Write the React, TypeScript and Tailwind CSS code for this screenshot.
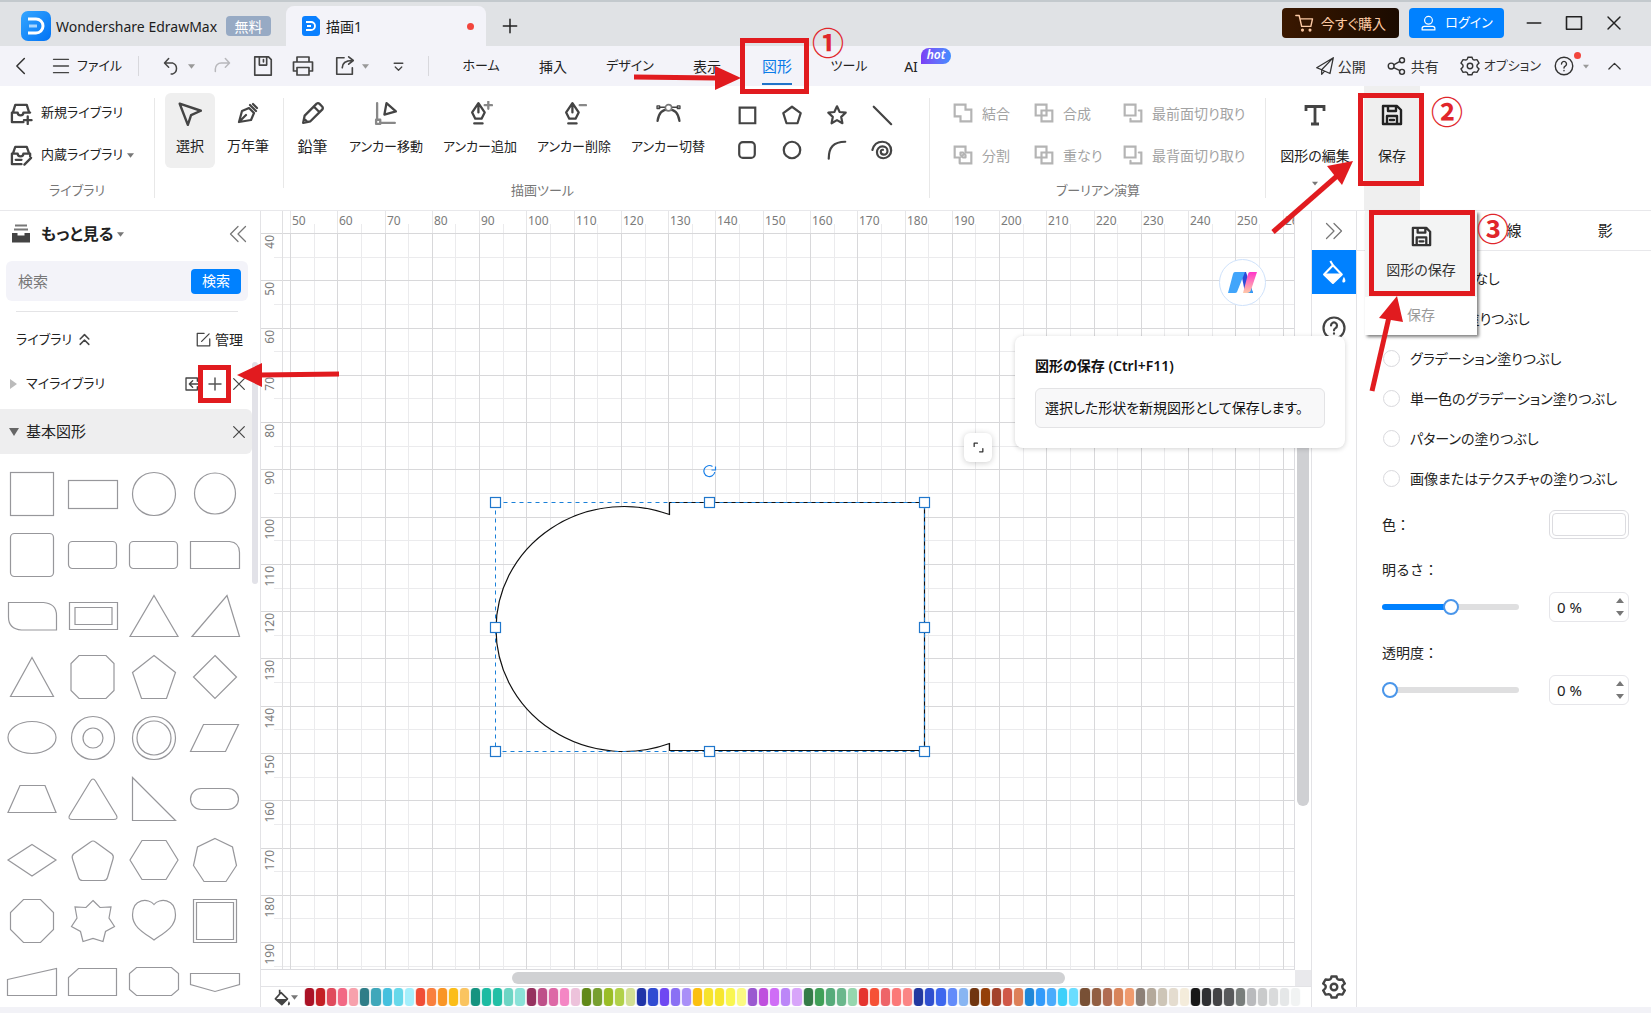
import React, { useState } from "react";
import type { ReactNode } from "react";

type IconProps = { size?: number; sw?: number; className?: string; children: ReactNode };

function Icon({ size = 24, sw = 2, className = "", children }: IconProps) {
  return (
    <svg
      width={size}
      height={size}
      viewBox="0 0 24 24"
      fill="none"
      stroke="currentColor"
      strokeWidth={sw}
      strokeLinecap="round"
      strokeLinejoin="round"
      className={"shrink-0 " + className}
      aria-hidden="true"
    >
      {children}
    </svg>
  );
}

function Caret({ className = "" }: { className?: string }) {
  return (
    <svg width="8" height="5" viewBox="0 0 8 5" className={"shrink-0 fill-[#777] " + className} aria-hidden="true">
      <path d="M0 0h8L4 5z" />
    </svg>
  );
}

function Cross() {
  return (
    <Icon size={16} sw={1.8} className="text-[#444]">
      <path d="M4 4l16 16M20 4L4 20" />
    </Icon>
  );
}

function FloppyIcon({ size = 24 }: { size?: number }) {
  return (
    <Icon size={size} sw={2.4}>
      <path d="M3 3h14l4 4v14H3z M8 3v5h8V3 M7 21v-8h10v8 M10 17h4" />
    </Icon>
  );
}

/* ---------- tutorial annotations ---------- */

function MarkBox({ className }: { className: string }) {
  return <span className={"pointer-events-none absolute z-50 border-[5px] border-[#e11b1f] " + className} />;
}

function StepNumber({ children, className }: { children: ReactNode; className: string }) {
  return (
    <span className={"pointer-events-none absolute z-50 text-[32px] leading-8 font-bold text-[#e0262b] " + className}>
      {children}
    </span>
  );
}

function Arrow({ w, h, line, head, className }: { w: number; h: number; line: string; head: string; className: string }) {
  return (
    <svg width={w} height={h} viewBox={`0 0 ${w} ${h}`} className={"pointer-events-none absolute z-50 max-w-none " + className} aria-hidden="true">
      <path d={line} stroke="#e11b1f" strokeWidth="5" />
      <path d={head} fill="#e11b1f" />
    </svg>
  );
}

/* ---------- title bar ---------- */

function TitleBar() {
  return (
    <header className="flex h-[46px] shrink-0 items-stretch border-t-2 border-[#c3c9cd] bg-[#e0e2e5]">
      <div className="flex w-[286px] items-center pt-1 pl-[21px]">
        <svg width="30" height="30" viewBox="0 0 30 30" aria-hidden="true">
          <defs>
            <linearGradient id="logo" x1="0" y1="0" x2="1" y2="1">
              <stop offset="0" stopColor="#35a6ff" />
              <stop offset="1" stopColor="#0072f5" />
            </linearGradient>
          </defs>
          <rect width="30" height="30" rx="7" fill="url(#logo)" />
          <path d="M7 8h8a7 7 0 0 1 0 14H7" fill="none" stroke="#fff" strokeWidth="3" />
          <path d="M8 15h8" stroke="#a9d6ff" strokeWidth="3" />
        </svg>
        <span className="ml-[5px] w-[170px] text-[14px] whitespace-nowrap text-[#1c1c1c]">Wondershare EdrawMax</span>
        <span className="flex h-5 w-[45px] items-center justify-center rounded bg-[#97aac4] text-[14px] text-white">無料</span>
      </div>
      <div className="mt-1 flex w-[200px] items-center rounded-t-lg bg-[#f3f3f9] pr-3 pl-4">
        <svg width="18" height="20" viewBox="0 0 18 20" aria-hidden="true">
          <path d="M3 0h11l4 4v13a3 3 0 0 1-3 3H3a3 3 0 0 1-3-3V3a3 3 0 0 1 3-3z" fill="#0a80ff" />
          <path d="M4 6h5a4 4 0 0 1 0 8H4M5 10h4" fill="none" stroke="#fff" strokeWidth="1.8" />
        </svg>
        <span className="ml-1.5 text-[14px] text-[#222]">描画1</span>
        <span className="ml-auto h-[7px] w-[7px] rounded-full bg-[#f2453d]" />
      </div>
      <button aria-label="新しいタブ" className="mt-1 ml-3 flex w-6 items-center justify-center text-[#222]">
        <Icon size={20} sw={1.8}>
          <path d="M12 4v16M4 12h16" />
        </Icon>
      </button>
      <div className="ml-auto flex items-start pt-[6px]">
        <button className="flex h-[30px] w-[117px] items-center justify-center gap-1.5 rounded bg-linear-to-r from-[#3a1800] to-[#1b0b00] text-[14px] text-[#fcc9a3]">
          <Icon size={20} sw={1.7}>
            <path d="M1 3h4l3 13h11l2-9H6" />
            <circle cx="9" cy="20.5" r="1" />
            <circle cx="18" cy="20.5" r="1" />
          </Icon>
          今すぐ購入
        </button>
        <button className="ml-[10px] flex h-[30px] w-[95px] items-center justify-center gap-2 rounded bg-[#0081ff] text-[13px] text-white">
          <Icon size={17} sw={1.7}>
            <circle cx="12" cy="7.5" r="5.5" />
            <path d="M3 21v-2q0-3 3-3h12q3 0 3 3v2z" />
          </Icon>
          ログイン
        </button>
        <button aria-label="最小化" className="ml-5 flex h-[30px] w-[20px] items-center justify-center text-[#222]">
          <Icon size={18} sw={2}>
            <path d="M3 12h18" />
          </Icon>
        </button>
        <button aria-label="最大化" className="ml-5 flex h-[30px] w-[20px] items-center justify-center text-[#222]">
          <Icon size={20} sw={1.9}>
            <path d="M3 4.500h18v15H3z" />
          </Icon>
        </button>
        <button aria-label="閉じる" className="mr-[27px] ml-5 flex h-[30px] w-[20px] items-center justify-center text-[#222]">
          <Icon size={18} sw={1.9}>
            <path d="M4 4l16 16M20 4L4 20" />
          </Icon>
        </button>
      </div>
    </header>
  );
}

/* ---------- menu bar ---------- */

const menuTabs = [
  { label: "ホーム", cls: "w-[72px] text-[13px]" },
  { label: "挿入", cls: "w-[72px] text-[14px]" },
  { label: "デザイン", cls: "w-[82px] text-[13px]" },
  { label: "表示", cls: "w-[72px] text-[14px]" },
  { label: "図形", cls: "w-[68px] text-[15px] text-[#0a7be8]", active: true },
  { label: "ツール", cls: "w-[76px] text-[13px]" },
  { label: "AI", cls: "w-[48px] text-[14px]", hot: true },
];

function MenuBar() {
  return (
    <div className="relative flex h-10 shrink-0 items-center bg-[#f3f3f9] text-[14px] text-[#222]">
      <button aria-label="戻る" className="ml-[11px] flex w-5 justify-center text-[#333]">
        <Icon size={20} sw={1.8}>
          <path d="M16 3l-9 9 9 9" />
        </Icon>
      </button>
      <button className="ml-5 flex w-[87px] items-center gap-1.5 text-[13px]">
        <Icon size={20} sw={1.6} className="text-[#444]">
          <path d="M3 4h18M3 12h18M3 20h18" />
        </Icon>
        ファイル
      </button>
      <span className="h-5 w-px bg-[#d8d8dd]" />
      <button aria-label="元に戻す" className="ml-[23px] flex items-center gap-[6px] text-[#444]">
        <Icon size={20} sw={1.8}>
          <path d="M8 3L3 8.500l5 5M3.500 8.500H13a7 7 0 0 1 0 13h-2" />
        </Icon>
        <Caret className="w-[7px] fill-[#999]" />
      </button>
      <button aria-label="やり直し" className="ml-[17px] text-[#b8b8bc]">
        <Icon size={20} sw={1.8}>
          <path d="M16 3l5 5.500-5 5M20.500 8.500H11a7 7 0 0 0-7 7v3" />
        </Icon>
      </button>
      <button aria-label="保存" className="ml-[20px] text-[#444]">
        <Icon size={22} sw={1.8}>
          <path d="M3 2h15l3 3v17H3zM8 2v9h8V2M12.500 5v2.500" />
        </Icon>
      </button>
      <button aria-label="印刷" className="ml-[17px] text-[#444]">
        <Icon size={24} sw={1.7}>
          <path d="M6 8V3h12v5M6 17H2.500V8h19v9H18M6 13.500h12V21H6z" />
        </Icon>
      </button>
      <button aria-label="エクスポート" className="ml-[19px] flex items-center gap-[6px] text-[#444]">
        <Icon size={22} sw={1.8}>
          <path d="M11 3H3v18h17v-7M9 14c0-5 4-8 11-8M16 2l5 4-5 4" />
        </Icon>
        <Caret className="w-[7px] fill-[#999]" />
      </button>
      <button aria-label="その他" className="ml-[21px] flex w-4 justify-center text-[#444]">
        <Icon size={13} sw={2.4}>
          <path d="M4 6h16M6 13l6 6 6-6" />
        </Icon>
      </button>
      <span className="mr-4 ml-[22px] h-5 w-px bg-[#d8d8dd]" />
      {menuTabs.map((t) => (
        <button key={t.label} className={"relative flex h-10 items-center justify-center " + t.cls}>
          {t.label}
          {t.active && (
            <>
              <span className="absolute bottom-[1px] h-0.5 w-[30px] bg-[#2173c8]" />
              <MarkBox className="top-[-8px] left-[-3px] h-[56px] w-[69px]" />
              <StepNumber className="top-[-19px] left-[69px]">①</StepNumber>
              <Arrow w={108} h={26} line="M0 12L82 13" head="M81 1L107 13L81 25z" className="top-[19px] left-[-109px]" />
            </>
          )}
          {t.hot && (
            <span className="absolute top-0.5 left-[34px] h-4 w-[30px] rounded-[8px_8px_8px_0] bg-linear-to-r from-[#7a3df5] to-[#3d8dff] text-center text-[12px] leading-[14px] font-semibold text-white italic">
              hot
            </span>
          )}
        </button>
      ))}
      <div className="ml-auto flex items-center text-[#333]">
        <button className="flex items-center gap-[3px]">
          <Icon size={20} sw={1.5}>
            <path d="M22 2L2 14l6 2.500L18 21zM22 2L8 16.500V22l3.500-3.800" />
          </Icon>
          公開
        </button>
        <button className="ml-[21px] flex items-center gap-[4px]">
          <Icon size={20} sw={1.7}>
            <circle cx="5" cy="12" r="3.500" />
            <circle cx="18" cy="5" r="3" />
            <circle cx="18" cy="19" r="3" />
            <path d="M8 10.500L15.500 6.500M8 14l7.500 3.500" />
          </Icon>
          共有
        </button>
        <button className="ml-[21px] flex items-center gap-[4px] text-[13px]">
          <Gear size={20} sw={1.7} />
          オプション
        </button>
        <button aria-label="ヘルプ" className="relative ml-[13px] flex items-center gap-[9px]">
          <Icon size={20} sw={1.7}>
            <circle cx="12" cy="12" r="10.500" />
            <path d="M9 9.500a3 3 0 1 1 4.500 2.600q-1.500.9-1.500 2.200M12 17.300v.4" />
          </Icon>
          <span className="absolute top-[-4px] left-[20px] h-[7px] w-[7px] rounded-full bg-[#f2453d]" />
          <Caret className="w-[6px] fill-[#999]" />
        </button>
        <button aria-label="リボンを折りたたむ" className="mr-[29px] ml-[18px]">
          <Icon size={15} sw={2}>
            <path d="M3 16l9-9 9 9" />
          </Icon>
        </button>
      </div>
    </div>
  );
}

function Gear({ size, sw }: { size: number; sw: number }) {
  return (
    <Icon size={size} sw={sw}>
      <path d="M9.500 1.500h5q.4 3.600 3.600 3.200l2.400-.2 2.300 4.100q-2.600 1.700-2.600 3.400t2.600 3.400l-2.300 4.100-2.400-.2q-3.200-.4-3.600 3.200h-5q-.4-3.600-3.600-3.200l-2.400.2-2.300-4.100Q3.800 13.700 3.800 12T1.200 8.600l2.300-4.100 2.400.2q3.200.4 3.600-3.200z" />
      <circle cx="12" cy="12" r="3.300" />
    </Icon>
  );
}

/* ---------- ribbon ---------- */

const drawTools: { label: string; icon: ReactNode; cls: string }[] = [
  {
    label: "鉛筆",
    cls: "w-[53px] text-[15px]",
    icon: <path d="M3 21l1.500-7L16 2.500q1.500-1 3 .5l2 2q1.500 1.500.5 3L10 19.500zM13.500 5.500l5 5M4 17l3 3" />,
  },
  {
    label: "アンカー移動",
    cls: "w-[94px] text-[13px]",
    icon: (
      <>
        <path d="M3 2v16M6 21h14" stroke="#888" />
        <path d="M2 18h4v4H2z" stroke="#888" />
        <path d="M12 2l9 8-11 3z" />
      </>
    ),
  },
  {
    label: "アンカー追加",
    cls: "w-[94px] text-[13px]",
    icon: (
      <>
        <path d="M10 2l6 9-3 6H7l-3-6zM10 4v7M6 21.500h8" />
        <path d="M16 4h7M19.500 .5v7" stroke="#888" />
      </>
    ),
  },
  {
    label: "アンカー削除",
    cls: "w-[94px] text-[13px]",
    icon: (
      <>
        <path d="M10 2l6 9-3 6H7l-3-6zM10 4v7M6 21.500h8" />
        <path d="M17 4h6" stroke="#888" />
      </>
    ),
  },
  {
    label: "アンカー切替",
    cls: "w-[94px] text-[13px]",
    icon: (
      <>
        <path d="M1.500 19c1-7 4-11 10.500-11s9.500 4 10.500 11" />
        <path d="M3 6h6M15 6h6" strokeWidth="1.500" />
        <path d="M1 4.700h2.500v2.500H1zM20.500 4.700H23v2.500h-2.500z" strokeWidth="1.300" />
        <circle cx="12" cy="6.500" r="3" fill="#fff" stroke="#777" strokeWidth="1.500" />
      </>
    ),
  },
];

const quickShapes: { name: string; d: ReactNode }[] = [
  { name: "四角形", d: <path d="M4 4h17v17H4z" strokeLinejoin="miter" /> },
  { name: "五角形", d: <path d="M12 3l9.500 7L18 21H6L2.500 10z" /> },
  { name: "星", d: <path d="M12 2.500l2.900 6.200 6.600.8-4.900 4.600 1.300 6.900-5.900-3.400-5.900 3.400 1.300-6.900L2.500 9.500l6.600-.8z" /> },
  { name: "直線", d: <path d="M3 3l19 19" /> },
  { name: "角丸四角形", d: <rect x="3.500" y="3.500" width="17" height="17" rx="4" /> },
  { name: "円", d: <circle cx="12" cy="12" r="9" /> },
  { name: "円弧", d: <path d="M3 21.500C3 9 8 3 21 3" /> },
  {
    name: "らせん",
    d: <path d="M1.500 12C3 6 7 3 12.500 3 18 3 22 7 22 12.500c0 5-4 8.500-8.500 8.500-4.500 0-7-3-7-6.500s2.500-6.500 6-6.500 5.500 2.500 5.500 5-2 4-4 4-3.300-1.500-3.300-3.200 1.300-2.300 2.300-2" />,
  },
];

const boolOps: { label: string; d: string }[][] = [
  [
    { label: "結合", d: "M2 2h13v6h7v14H9v-6H2z" },
    { label: "分割", d: "M15 8V2H2v13h6M9 22h13V9h-6M9 9h3M9 9v3M15 15h-3M15 15v-3M8 22v-6M10 14l4-4" },
  ],
  [
    { label: "合成", d: "M2 2h13v13H2zM9 9h13v13H9z" },
    { label: "重なり", d: "M2 2h13v13H2zM9 9h13v13H9z" },
  ],
  [
    { label: "最前面切り取り", d: "M2 2h13v13H2zM19 9h3v13H9v-3" },
    { label: "最背面切り取り", d: "M2 2h13v13H2zM19 9h3v13H9v-3" },
  ],
];

function GroupLabel({ children }: { children: ReactNode }) {
  return <div className="mt-auto pb-[10px] text-center text-[13px] leading-5 text-[#777]">{children}</div>;
}

function Divider({ className = "h-[100px]" }: { className?: string }) {
  return <span className={"mt-3 w-px shrink-0 bg-[#e8e8e8] " + className} />;
}

function Ribbon() {
  return (
    <div className="relative flex h-[124px] shrink-0 bg-white text-[14px] text-[#222]">
      <div className="flex w-[154px] shrink-0 flex-col pt-[14px] text-[13px]">
        <button className="flex h-[26px] items-center gap-2 pl-[10px]">
          <Icon size={23} sw={2.4} className="text-[#444]">
            <path d="M3 11l2.500-8h12L20 11M2 11h6q0 3 3 3t3-3h7M2 11v10h12M18.500 15v8M14.500 19h8" />
          </Icon>
          新規ライブラリ
        </button>
        <button className="mt-4 flex h-[26px] items-center gap-2 pl-[10px]">
          <Icon size={23} sw={2.4} className="text-[#444]">
            <path d="M3 10l2.500-7h12L20 10M2 10h6q0 3 3 3t3-3h7v3M2 10v11h10M6 16.500h6M15 21.500l7-7" />
          </Icon>
          <span className="flex items-center gap-1">
            内蔵ライブラリ
            <Caret className="w-[7px]" />
          </span>
        </button>
        <GroupLabel>ライブラリ</GroupLabel>
      </div>
      <Divider />
      <div className="flex w-[128px] shrink-0 items-start pt-[7px] pl-[10px]">
        <button className="flex h-[75px] w-[50px] flex-col items-center gap-[9px] rounded-md bg-[#efefef] pt-2 text-[14px]">
          <Icon size={26} sw={2.2} className="text-[#444]">
            <path d="M2.500 2.500L22 9l-9 4-3 9z" />
          </Icon>
          <span className="leading-5">選択</span>
        </button>
        <button className="ml-[8px] flex h-[75px] w-[50px] flex-col items-center gap-[9px] pt-2 text-[14px]">
          <Icon size={24} sw={2.2} className="text-[#444]">
            <path d="M3 21l3-11 7-3 5 5-3 7zM3 21l7-7M14 4l6 6M17 3l4 4" />
          </Icon>
          <span className="mt-0.5 leading-5 whitespace-nowrap">万年筆</span>
        </button>
      </div>
      <Divider className="h-[90px]" />
      <div className="flex w-[645px] shrink-0 flex-col pt-[15px]">
        <div className="flex pl-0.5">
          {drawTools.map((t) => (
            <button key={t.label} className={"flex flex-col items-center gap-[10px] " + t.cls}>
              <Icon size={25} sw={2.2} className="text-[#444]">
                {t.icon}
              </Icon>
              <span className="leading-5 whitespace-nowrap">{t.label}</span>
            </button>
          ))}
          <div className="ml-[9px] grid grid-cols-4 gap-y-[11px] pt-[2px]">
            {quickShapes.map((s) => (
              <button key={s.name} aria-label={s.name} className="flex h-6 w-[45px] items-center justify-center text-[#444]">
                <Icon size={22} sw={2.4}>
                  {s.d}
                </Icon>
              </button>
            ))}
          </div>
        </div>
        <div className="mt-auto pr-[128px] text-center">
          <GroupLabel>描画ツール</GroupLabel>
        </div>
      </div>
      <Divider />
      <div className="flex w-[335px] shrink-0 flex-col pt-[14px] pl-[23px] text-[#a3a3a3]">
        <div className="flex">
          {boolOps.map((col, i) => (
            <div key={i} className={"flex flex-col gap-4 " + (i === 0 ? "w-[81px]" : i === 1 ? "w-[89px]" : "")}>
              {col.map((op) => (
                <button key={op.label} disabled className="flex h-[26px] items-center gap-[9px] whitespace-nowrap">
                  <Icon size={20} sw={2.6} className="text-[#b4b4b4]">
                    <path d={op.d} strokeLinejoin="miter" />
                  </Icon>
                  {op.label}
                </button>
              ))}
            </div>
          ))}
        </div>
        <div className="mt-auto pr-[22px]">
          <GroupLabel>ブーリアン演算</GroupLabel>
        </div>
      </div>
      <Divider />
      <button className="flex w-[98px] shrink-0 flex-col items-center pt-[17px]">
        <svg width="24" height="24" viewBox="0 0 24 24" fill="none" stroke="#444" strokeWidth="2.8" aria-hidden="true">
          <path d="M3 8V3.500h18V8M12 3.500v17M8 21h8" />
        </svg>
        <span className="mt-[19px] leading-5 whitespace-nowrap">図形の編集</span>
        <Caret className="mt-[15px] w-[6px]" />
      </button>
      <div className="relative w-14 shrink-0 bg-[#efefef]">
        <button className="flex h-full w-full flex-col items-center pt-[17px] text-[14px] text-[#222]">
          <FloppyIcon />
          <span className="mt-[19px] leading-5">保存</span>
        </button>
        <MarkBox className="top-[7px] left-[-6px] h-[93px] w-[66px]" />
        <StepNumber className="top-[10px] left-[67px]">②</StepNumber>
        <Arrow w={84} h={76} line="M2 72L66 16" head="M82 1L56 6L71 25z" className="top-[74px] left-[-93px]" />

        <div className="absolute top-[125px] left-px z-40 w-[112px] bg-white shadow-[2px_2px_3px_rgba(0,0,0,0.5)]">
          <button className="flex h-[86px] w-full flex-col items-center bg-[#f3f4f4] pt-[14px] text-[#333]">
            <FloppyIcon size={23} />
            <span className="mt-[12px] leading-5">図形の保存</span>
          </button>
          <div className="h-[38px] text-center text-[14px] leading-[36px] text-[#999]">保存</div>
          <MarkBox className="top-[-1px] left-[4px] h-[86px] w-[106px]" />
          <StepNumber className="top-[2px] left-[112px]">③</StepNumber>
          <Arrow w={40} h={98} line="M5 96L22 22" head="M30 1L12 23L36 27z" className="top-[84px] left-0.5" />
        </div>
      </div>
    </div>
  );
}

/* ---------- left library panel ---------- */

/* Each outline is drawn in a 61x61 cell, centred on 31,31. */
const libraryShapes: ReactNode[] = [
  <rect x="9.500" y="9.500" width="43" height="43" />,
  <rect x="6.500" y="17.500" width="49" height="28" />,
  <circle cx="31" cy="31" r="21.500" />,
  <circle cx="31" cy="30.500" r="20.500" />,
  <rect x="9.500" y="9.500" width="43" height="43" rx="4" />,
  <rect x="6.500" y="17.500" width="48" height="27" rx="4" />,
  <rect x="6.500" y="17.500" width="48" height="27" rx="4" />,
  <path d="M6.500 17.500h39q10 1 10 11v16h-49z" />,
  <path d="M7.500 17.500h35q13 1 13 13v14.500h-35q-13-1-13-13z" />,
  <path d="M7.500 17.500h48v27h-48zM13 22.500h37v17H13z" />,
  <path d="M31 10.500l24 41H7z" />,
  <path d="M43 10.500l12.500 41H8z" />,
  <path d="M31 11.500l21.500 39h-43z" />,
  <path d="M17 9.500h27l8 8v27l-8 8H17l-8-8v-27z" />,
  <path d="M31 9.500l21.500 17-9 26h-25l-9-26z" />,
  <path d="M31 9.500L52.500 31 31 52.500 9.500 31z" />,
  <ellipse cx="31" cy="30.500" rx="24" ry="16" />,
  <g><circle cx="31" cy="31" r="21.500" /><circle cx="31" cy="31" r="10" /></g>,
  <g><circle cx="31" cy="31" r="21.500" /><circle cx="31" cy="31" r="17" /></g>,
  <path d="M19.500 17.500h35l-13 27H6.500z" />,
  <path d="M19 17.500h25l11 27H7z" />,
  <path d="M28.500 13q2.500-4 5 0l21 34.500q2 4-3 4h-41q-5 0-3-4z" />,
  <path d="M9.500 9.500l43 43h-43z" />,
  <rect x="6.500" y="20.500" width="48" height="21" rx="10.500" />,
  <path d="M31 15.500l24 15.500-24 16L7 31z" />,
  <path d="M28.500 13q2.500-2 5 0l16.500 12q2 2 1 5L45.500 48.500q-1 3-4 3h-21q-3 0-4-3L10.500 30q-1-3 1-5z" />,
  <path d="M19 11.500h24L55 31 43 50.500H19L7 31z" />,
  <path d="M31 9.500l17.500 8.500 4 18.500L42 52.500H20L9.500 36.500l4-18.500z" />,
  <path d="M22.500 9.500h17l13 13v17l-13 13h-17l-13-13v-17z" />,
  <path d="M31 10.500l7 7 11-.5-2 11 5.500 8.500-9 5L41 51.500l-10-3-10 3-2.500-10-9-5L15 28l-2-11 11 .5z" />,
  <path d="M31 14.500C36 8 52.500 8 52.500 25 52.500 38 39 44 31 50 23 44 9.500 38 9.500 25 9.500 8 26 8 31 14.500z" />,
  <path d="M9.500 9.500h43v43h-43zM12.500 12.500h37v37h-37z" />,
  <path d="M6.500 28.500l49-11v27h-49z" />,
  <path d="M16.500 17.500h38v27h-48v-18z" />,
  <path d="M13.500 16.500h35l7 6v16l-7 6h-35l-7-6v-16z" />,
  <path d="M6.500 22.500h49v11L31 40.500 6.500 33.500z" />,
];

function LeftPanel() {
  return (
    <aside className="relative z-20 flex w-[261px] shrink-0 flex-col border-r border-[#e3e3e6] bg-white text-[#222]">
      <div className="flex h-[46px] shrink-0 items-center pr-[12px] pl-[11px]">
        <svg width="20" height="20" viewBox="0 0 20 20" aria-hidden="true">
          <path d="M4 1.500h12M3 5.500h14" stroke="#777" strokeWidth="2" />
          <path d="M1 9h5.500v2.500h7V9H19v9.500H1z" fill="#444" />
        </svg>
        <button className="ml-[10px] flex items-center gap-[3px] text-[16px] font-bold">
          もっと見る
          <Caret className="w-[7px]" />
        </button>
        <button aria-label="パネルを閉じる" className="ml-auto text-[#777]">
          <Icon size={20} sw={1.5}>
            <path d="M12 3l-9 9 9 9M21 3l-9 9 9 9" />
          </Icon>
        </button>
      </div>
      <form className="mt-1 mr-3 ml-1.5 flex h-10 shrink-0 items-center rounded-md bg-[#f3f3f9] pr-[7px] pl-3">
        <input aria-label="検索" placeholder="検索" className="min-w-0 flex-1 bg-transparent text-[15px] outline-none placeholder:text-[#777]" />
        <button type="button" className="h-[25px] w-[50px] rounded bg-[#0081ff] text-[14px] leading-5 text-white">
          検索
        </button>
      </form>
      <hr className="mt-[10px] mr-[22px] ml-4 shrink-0 border-[#e4e4e6]" />
      <div className="flex h-[53px] shrink-0 items-center pt-0.5 pr-[17px] pl-4 text-[13px]">
        <button className="flex items-center gap-[6px]">
          ライブラリ
          <Icon size={13} sw={2.8} className="text-[#444]">
            <path d="M4 11l8-8 8 8M4 21l8-8 8 8" />
          </Icon>
        </button>
        <button className="ml-auto flex items-center gap-1 text-[14px]">
          <Icon size={15} sw={2} className="text-[#444]">
            <path d="M13 2H2v20h20V11M9 15L21 3" />
          </Icon>
          管理
        </button>
      </div>
      <div className="relative mb-[6px] flex h-[38px] shrink-0 items-center pr-[13px] pl-[10px] text-[13px]">
        <svg width="7" height="10" viewBox="0 0 7 10" className="fill-[#bbb]" aria-hidden="true">
          <path d="M0 0l7 5-7 5z" />
        </svg>
        <span className="ml-[9px]">マイライブラリ</span>
        <div className="ml-auto flex items-center">
          <button aria-label="インポート" className="text-[#444]">
            <Icon size={16} sw={2}>
              <path d="M20 8V3H3v18h17v-5M22 12H8M13 7l-5 5 5 5" />
            </Icon>
          </button>
          <button aria-label="追加" className="mr-[8px] ml-[7px] text-[#555]">
            <Icon size={16} sw={2.2}>
              <path d="M12 3v18M3 12h18" />
            </Icon>
          </button>
          <button aria-label="マイライブラリを閉じる">
            <Cross />
          </button>
        </div>
        <MarkBox className="top-0 left-[198px] h-[38px] w-[33px]" />
        <Arrow w={102} h={26} line="M24 13L102 12" head="M0 13L25 1V25z" className="top-[-3px] left-[237px]" />
      </div>
      <div className="mr-2 flex h-[45px] shrink-0 items-center rounded-r-md bg-[#eeeeef] pr-[5px] pl-[9px] text-[15px]">
        <svg width="10" height="8" viewBox="0 0 10 8" className="fill-[#666]" aria-hidden="true">
          <path d="M0 0h10L5 8z" />
        </svg>
        <span className="ml-[7px] flex-1">基本図形</span>
        <button aria-label="基本図形を閉じる">
          <Cross />
        </button>
      </div>
      <div className="mt-[9px] ml-px grid min-h-0 flex-1 auto-rows-[61px] grid-cols-[repeat(4,61px)] overflow-hidden">
        {libraryShapes.map((s, i) => (
          <button key={i} aria-label={`基本図形 ${i + 1}`} className="h-[61px]">
            <svg width="61" height="61" viewBox="0 0 61 61" fill="none" stroke="#97979b" strokeWidth="1.2" aria-hidden="true">
              {s}
            </svg>
          </button>
        ))}
      </div>
      <span className="absolute top-[151px] right-[2px] h-[222px] w-1.5 rounded-full bg-[#e2e2e8]" />
    </aside>
  );
}

/* ---------- drawing canvas ---------- */

const STEP = 47.27;
const xMajor = Array.from({ length: 22 }, (_, i) => 29 + i * STEP);
const yMajor = Array.from({ length: 16 }, (_, i) => 22 + i * STEP);
const px = (n: number) => Math.round(n) + 0.5;

function DrawingSheet() {
  const handles = [
    [234, 291], [448, 291], [663, 291],
    [234, 416], [663, 416],
    [234, 540], [448, 540], [663, 540],
  ];
  return (
    <svg className="absolute inset-0 h-full w-full bg-white" aria-label="描画キャンバス">
      <g shapeRendering="crispEdges">
        {xMajor.map((x) => (
          <path key={"a" + x} d={`M${px(x + STEP / 2)} 13V2000`} stroke="#ebebed" />
        ))}
        {yMajor.map((y) => (
          <path key={"b" + y} d={`M13 ${px(y + STEP / 2)}H3000`} stroke="#ebebed" />
        ))}
        {xMajor.map((x) => (
          <path key={"c" + x} d={`M${px(x)} 22V2000`} stroke="#d8d8da" />
        ))}
        {xMajor.map((x) => (
          <path key={"e" + x} d={`M${px(x)} 0V22`} stroke="#e6e6e8" />
        ))}
        {yMajor.map((y) => (
          <path key={"d" + y} d={`M0 ${px(y)}H3000`} stroke="#d8d8da" />
        ))}
        <path d="M21.500 0V2000" stroke="#e0e0e2" />
      </g>
      <g fill="#7b7b7b" fontSize="12">
        {xMajor.map((x, i) => (
          <text key={x} x={Math.round(x) + 2} y="14">
            {50 + i * 10}
          </text>
        ))}
        {yMajor.map((y, i) => (
          <text key={y} textAnchor="end" transform={`translate(13 ${Math.round(y) + 2}) rotate(-90)`}>
            {40 + i * 10}
          </text>
        ))}
      </g>
      <path
        d="M408.500 303.500A128 122.500 0 1 0 408.500 532.500V539.500H663.500V291.500H408.500z"
        fill="#fff"
        stroke="#111"
        strokeWidth="1.2"
      />
      <rect x="234.500" y="291.500" width="429" height="249" fill="none" stroke="#1a80d8" strokeDasharray="4 4" />
      {handles.map(([x, y]) => (
        <rect key={x + "-" + y} x={x - 4.5} y={y - 4.5} width="10" height="10" fill="#fff" stroke="#2077cc" strokeWidth="1.2" />
      ))}
      <path d="M451.500 255.500A5.500 5.500 0 1 0 453.800 261M454.500 255.500v3.500h-4" fill="none" stroke="#1a80e8" strokeWidth="1.2" />
    </svg>
  );
}

const swatches =
  "ab1226 c41f24 e04a5c f26884 f7a1ac 2f7d88 3fa7ba 45c0de 66d8ea a5effc f04e37 f97f3e f99526 fbbd18 fac460 159380 1dbba2 22bfa6 6dd5c4 8ae2d8 95315f be5089 dd68a6 f486c4 edc2db 618918 779f30 9abd26 b1d149 d2df93 2034a8 304bd2 6e48f2 8a70f4 a98ff8 fbbf10 f6e32c f6e62e f9f650 fbfa82 9a58d0 bf4fde cf6df6 bc86f8 d8a5fa 357b48 40a058 56ab7a 6ab78c 96d6ae e5342f f65136 ee6468 fb7878 fb8585 2238a0 2f4fcf 3d67ee 628bfa 88b5f2 703510 943f08 a3412a d05848 dd8058 1f87d8 339bfa 4aabfc 3cd0fa 6addff 785035 925f43 b06c52 d8845a ef9a6d 8d8077 b4a99b cdc5b7 e4dccf f4ecdb 181818 2f3033 434345 58595b 797e7c b9babd c9cacb d9dadb e5e7e8 f1f3f3".split(" ");

function CanvasArea() {
  return (
    <section className="relative z-10 flex min-w-0 flex-1 flex-col">
      <div className="flex min-h-0 flex-1">
        <div className="relative min-w-0 flex-1 overflow-hidden border-r border-b border-[#dcdce0]">
          <DrawingSheet />
          <button aria-label="AI アシスタント" className="absolute top-[48px] right-[28px] flex h-[47px] w-[47px] items-center justify-center rounded-full border border-[#cfe2fb] bg-white">
            <svg width="31" height="23" viewBox="0 0 31 23" aria-hidden="true">
              <defs>
                <linearGradient id="pinkbar" x1="0" y1="0" x2="0" y2="1">
                  <stop offset="0" stopColor="#ff35c8" />
                  <stop offset="1" stopColor="#ffc9a8" />
                </linearGradient>
              </defs>
              <path d="M14 1h5l7 21h-8z" fill="#2b4bd8" />
              <path d="M20 22l4-6 2 6z" fill="#2f9bf5" />
              <path d="M8 1h10l-8 20q-.5 1-2 1H1L6 3q.5-2 2-2z" fill="#41a5fb" />
              <path d="M23 1h7l-6 18q-1 3-4 3h-4l5-19q.5-2 2-2z" fill="url(#pinkbar)" />
            </svg>
          </button>
          <button aria-label="全体表示" className="absolute top-[222px] right-[302px] flex h-[29px] w-[28px] items-center justify-center rounded-md bg-white text-[#333] shadow-[0_1px_6px_rgba(0,0,0,0.2)]">
            <Icon size={13} sw={2.4}>
              <path d="M4 10V4h6M20 14v6h-6" />
            </Icon>
          </button>
        </div>
        <div className="relative w-4 shrink-0 bg-white">
          <span className="absolute top-[190px] left-[2px] h-[405px] w-[12px] rounded-full bg-[#cfd0d3]" />
        </div>
      </div>
      <div className="flex h-4 shrink-0">
        <div className="flex flex-1 items-center bg-white pr-[230px] pl-[251px]">
          <span className="h-3 flex-1 rounded-full bg-[#d0d1d3]" />
        </div>
        <span className="w-4 bg-[#e9e9ec]" />
      </div>
      <div className="flex h-[21px] shrink-0 items-center border-t border-[#e3e3e6] bg-white pr-[10px] pl-[13px]">
        <button aria-label="塗りつぶし色" className="flex w-[30px] shrink-0 items-center">
          <svg width="17" height="17" viewBox="0 0 24 24" aria-hidden="true">
            <path d="M8 1v6M10 5l9 9-8 8-9-8z" fill="none" stroke="#444" strokeWidth="2.4" strokeLinejoin="round" />
            <path d="M3 14h16l-8 8zM21 17q3 5 0 6t0-6z" fill="#444" />
          </svg>
          <Caret className="w-[7px]" />
        </button>
        <div className="flex h-[18px] flex-1">
          {swatches.map((c, i) => (
            <button key={i} aria-label={"#" + c} className="flex-1 rounded-[4px] border-x border-white/80" style={{ backgroundColor: "#" + c }} />
          ))}
        </div>
      </div>

      <div role="tooltip" className="absolute top-[125px] right-[-34px] z-30 w-[330px] rounded-lg bg-white px-5 pt-[20px] pb-5 text-[#111] shadow-[0_1px_5px_rgba(0,0,0,0.18)]">
        <p className="text-[14px] leading-5 font-semibold">図形の保存 (Ctrl+F11)</p>
        <p className="mt-3 rounded-md border border-[#e3e3e5] bg-[#f8f8f9] px-[9px] py-[9px] text-[14px] leading-5 whitespace-nowrap">
          選択した形状を新規図形として保存します。
        </p>
      </div>
    </section>
  );
}

/* ---------- right side ---------- */

function Rail() {
  return (
    <nav className="flex w-[46px] shrink-0 flex-col items-center border-x border-[#e3e3e6] bg-white text-[#444]">
      <button aria-label="展開" className="flex h-[39px] items-center text-[#777]">
        <Icon size={20} sw={1.5}>
          <path d="M3 3l9 9-9 9M12 3l9 9-9 9" />
        </Icon>
      </button>
      <button aria-label="塗りつぶし" className="flex h-[44px] w-full items-center justify-center bg-[#0081ff]">
        <svg width="25" height="25" viewBox="0 0 24 24" aria-hidden="true">
          <path d="M8 1l2.500 4 8.500 9-8.500 8L2 14l8.500-9" fill="none" stroke="#fff" strokeWidth="2" strokeLinejoin="round" />
          <path d="M2 13h17l-8.500 9zM21 16q3 5 0 5.500t0-5.500z" fill="#fff" />
        </svg>
      </button>
      <button aria-label="ヘルプ" className="mt-[22px]">
        <Icon size={24} sw={2.2}>
          <circle cx="12" cy="12" r="10.500" />
          <path d="M9 9.500a3 3 0 1 1 4.500 2.600q-1.500.9-1.500 2.200M12 17.300v.4" />
        </Icon>
      </button>
      <button aria-label="設定" className="mt-auto mb-[8px]">
        <Gear size={24} sw={2.4} />
      </button>
    </nav>
  );
}

const fills = [
  "塗りつぶしなし",
  "単一色の塗りつぶし",
  "グラデーション塗りつぶし",
  "単一色のグラデーション塗りつぶし",
  "パターンの塗りつぶし",
  "画像またはテクスチャの塗りつぶし",
];

function SliderRow({ id, label, start, min }: { id: string; label: string; start: number; min: number }) {
  const [value, setValue] = useState(start);
  const pct = ((value - min) / (100 - min)) * 100;
  return (
    <div>
      <label htmlFor={id} className="block leading-6 [font-feature-settings:normal]">
        {label}
      </label>
      <div className="mt-[10px] flex h-[30px] items-center">
        <input
          id={id}
          type="range"
          min={min}
          max={100}
          value={value}
          onChange={(e) => setValue(Number(e.target.value))}
          style={{ backgroundImage: `linear-gradient(to right, #0081ff ${pct}%, #dfdfe0 ${pct}%)` }}
          className="h-1.5 w-[137px] appearance-none rounded-full [&::-webkit-slider-thumb]:h-4 [&::-webkit-slider-thumb]:w-4 [&::-webkit-slider-thumb]:appearance-none [&::-webkit-slider-thumb]:rounded-full [&::-webkit-slider-thumb]:border-2 [&::-webkit-slider-thumb]:border-[#4a96ea] [&::-webkit-slider-thumb]:bg-white"
        />
        <div className="ml-auto flex h-[30px] w-20 items-center rounded-md border border-[#e6e6ea] bg-white pr-[4px] pl-[7px]">
          <input aria-label={label + "の値"} value={`${value} %`} readOnly className="w-0 min-w-0 flex-1 text-[15px] outline-none" />
          <div className="flex flex-col gap-2">
            <button aria-label="増やす" onClick={() => setValue(Math.min(100, value + 1))}>
              <Caret className="rotate-180" />
            </button>
            <button aria-label="減らす" onClick={() => setValue(Math.max(min, value - 1))}>
              <Caret />
            </button>
          </div>
        </div>
      </div>
    </div>
  );
}

function FormatPanel() {
  return (
    <aside className="w-[294px] shrink-0 bg-white text-[14px] text-[#222]">
      <div className="grid h-10 grid-cols-3 border-b border-[#e8e8eb] pl-5 text-[15px]">
        <button>塗り</button>
        <button>線</button>
        <button>影</button>
      </div>
      <div className="pt-[7px] pr-[22px] pl-[25px]">
        <fieldset className="pl-px">
          {fills.map((f) => (
            <label key={f} className="flex h-10 items-center gap-[10px] whitespace-nowrap">
              <input type="radio" name="fill" className="h-[17px] w-[17px] shrink-0 appearance-none rounded-full border border-[#d9d9dd] checked:border-[5px] checked:border-[#0081ff]" />
              {f}
            </label>
          ))}
        </fieldset>
        <div className="mt-3 flex h-[29px] items-center justify-between">
          <label htmlFor="fill-color" className="[font-feature-settings:normal]">
            色：
          </label>
          <button id="fill-color" aria-label="色" className="h-[29px] w-20 rounded-md border border-[#dcdce0] p-[2px]">
            <span className="block h-full rounded border border-[#dcdce0] bg-white" />
          </button>
        </div>
        <div className="mt-[19px]">
          <SliderRow id="brightness" label="明るさ：" start={0} min={-100} />
        </div>
        <div className="mt-[19px]">
          <SliderRow id="opacity" label="透明度：" start={0} min={0} />
        </div>
      </div>
    </aside>
  );
}

export default function App() {
  return (
    <div className="flex h-screen flex-col overflow-hidden bg-white font-['Noto_Sans','Noto_Sans_CJK_JP',sans-serif] [font-feature-settings:'palt']">
      <TitleBar />
      <div className="relative z-40 shrink-0">
        <MenuBar />
        <Ribbon />
      </div>
      <main className="flex min-h-0 flex-1 border-t border-[#e8e8eb]">
        <LeftPanel />
        <CanvasArea />
        <Rail />
        <FormatPanel />
      </main>
      <div className="h-1.5 shrink-0 bg-[#f2f2f7]" />
    </div>
  );
}
